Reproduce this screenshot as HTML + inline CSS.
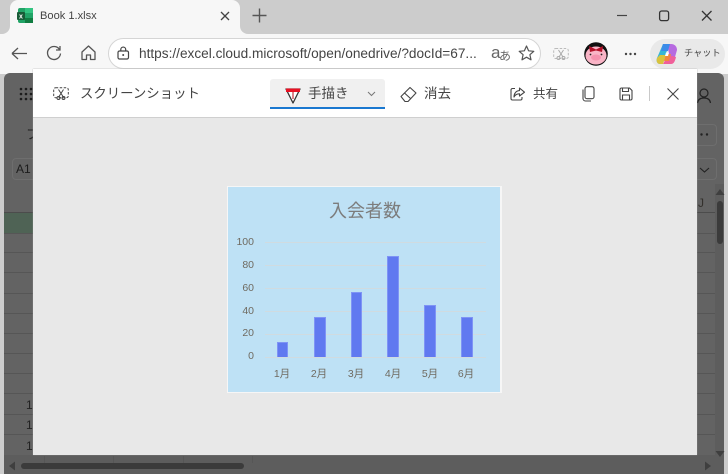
<!DOCTYPE html>
<html lang="ja"><head><meta charset="utf-8"><title>Book 1.xlsx</title>
<style>
html,body{margin:0;padding:0}
body{width:728px;height:474px;overflow:hidden;position:relative;background:#cccccc;font-family:"Liberation Sans","Noto Sans CJK JP",sans-serif;color:#333}
.a{position:absolute}
.t{position:absolute;white-space:nowrap;line-height:1}
svg{position:absolute;overflow:visible}
.b{position:absolute;background:#6079f0;border:1px solid #7f94f5;border-bottom:0;box-sizing:border-box}
.g{position:absolute;left:265px;width:221px;height:1px;background:#d0dbe0}
.yl{position:absolute;width:30px;left:224px;text-align:right;font-size:10.5px;line-height:12px;color:#6f6a60;white-space:nowrap}
.xl{position:absolute;width:30px;text-align:center;font-size:10.5px;line-height:12px;color:#6f6a60;white-space:nowrap}
.h{position:absolute;height:1px;background:#565656}
.v{position:absolute;width:1px;background:#565656}
</style></head><body>

<!-- tab strip -->
<div class="a" style="left:0;top:0;width:728px;height:34px;background:#cccccc"></div>
<div class="a" style="left:10px;top:0;width:230px;height:34px;background:#f7f7f7;border-radius:8px 8px 0 0"></div>
<div class="a" style="left:0;top:26px;width:10px;height:8px;background:#f7f7f7"></div>
<div class="a" style="left:0;top:0;width:10px;height:34px;background:#cccccc;border-radius:0 0 8px 0"></div>
<div class="a" style="left:240px;top:26px;width:10px;height:8px;background:#f7f7f7"></div>
<div class="a" style="left:240px;top:0;width:10px;height:34px;background:#cccccc;border-radius:0 0 0 8px"></div>

<svg style="left:17px;top:8px" width="16" height="16" viewBox="0 0 16 16">
<rect x="1" y="0" width="15" height="15" rx="2" fill="#21a366"/>
<rect x="8" y="0" width="8" height="5" fill="#33c481"/>
<rect x="8" y="10" width="8" height="5" fill="#107c41"/>
<rect x="0" y="4" width="8" height="8" rx="1" fill="#185c37"/>
<text x="2" y="10.5" font-size="7" font-weight="bold" fill="#fff" font-family="Liberation Sans">x</text>
</svg>
<div class="t" style="left:40px;top:11px;font-size:11.1px;color:#444">Book 1.xlsx</div>
<svg style="left:220px;top:11px" width="10" height="10" viewBox="0 0 10 10"><path d="M1 1L9 9M9 1L1 9" stroke="#444" stroke-width="1.3" fill="none"/></svg>
<svg style="left:252px;top:8px" width="15" height="15" viewBox="0 0 15 15"><path d="M7.5 0.5V14.5M0.5 7.5H14.5" stroke="#555" stroke-width="1.4" fill="none"/></svg>

<svg style="left:616px;top:10px" width="100" height="12" viewBox="0 0 100 12">
<path d="M1 5.5H11" stroke="#444" stroke-width="1.2" fill="none"/>
<rect x="43.6" y="1" width="9" height="9.6" rx="2" stroke="#333" stroke-width="1.3" fill="none"/>
<path d="M86 1L95.500 10.500M95.500 1L86 10.500" stroke="#333" stroke-width="1.3" fill="none"/>
</svg>

<!-- toolbar -->
<div class="a" style="left:0;top:34px;width:728px;height:40px;background:#f7f7f7"></div>
<svg style="left:11px;top:46px" width="17" height="15" viewBox="0 0 17 15"><path d="M1 7.500H16M1 7.500L7 2M1 7.500L7 13" stroke="#555" stroke-width="1.3" fill="none"/></svg>
<svg style="left:46px;top:45px" width="16" height="16" viewBox="0 0 16 16"><path d="M13.500 4.500A6.500 6.500 0 1 0 14.500 8.500M14 1V5H10" stroke="#555" stroke-width="1.3" fill="none"/></svg>
<svg style="left:81px;top:45px" width="15" height="16" viewBox="0 0 15 16"><path d="M1 7L7.500 1L14 7V14.500H9.500V10H5.500V14.500H1Z" stroke="#555" stroke-width="1.3" fill="none" stroke-linejoin="round"/></svg>
<div class="a" style="left:108px;top:38px;width:433px;height:31px;box-sizing:border-box;background:#fff;border:1px solid #d5d5d5;border-radius:16px"></div>
<svg style="left:117px;top:46px" width="13" height="14" viewBox="0 0 13 14"><rect x="1" y="5" width="10.500" height="8" rx="1.500" stroke="#444" stroke-width="1.200" fill="none"/><path d="M3.800 5V3.500A2.400 2.400 0 0 1 8.700 3.500V5" stroke="#444" stroke-width="1.200" fill="none"/><circle cx="6.200" cy="9" r="1" fill="#444"/></svg>
<div class="t" style="left:139px;top:47px;font-size:13.65px;color:#444">https://excel.cloud.microsoft/open/onedrive/?docId=67...</div>
<div class="t" style="left:491px;top:44px;font-size:17px;color:#666">a</div>
<div class="t" style="left:499px;top:50px;font-size:12px;color:#666">あ</div>
<svg style="left:518px;top:45px" width="17" height="16" viewBox="0 0 17 16"><path d="M8.500 1L10.600 5.800L15.800 6.300L11.900 9.700L13 14.800L8.500 12.200L4 14.800L5.100 9.700L1.200 6.300L6.400 5.800Z" stroke="#555" stroke-width="1.200" fill="none" stroke-linejoin="round"/></svg>
<svg style="left:553px;top:47px" width="16" height="14" viewBox="0 0 16 14"><rect x="0.700" y="1.500" width="14.600" height="10" rx="2" stroke="#bbb" stroke-width="1" stroke-dasharray="2.500 1.500" fill="none"/><path d="M5.500 3L10 10M10.500 3L6 10" stroke="#aaa" stroke-width="1" fill="none"/><circle cx="5.500" cy="11" r="1.500" stroke="#aaa" fill="none"/><circle cx="10.500" cy="11" r="1.500" stroke="#aaa" fill="none"/></svg>
<!-- avatar -->
<svg style="left:584px;top:42px" width="24" height="24" viewBox="0 0 24 24">
<circle cx="12" cy="12" r="11.800" fill="#111"/>
<ellipse cx="12" cy="13.500" rx="10.500" ry="9" fill="#f9b4c6"/>
<path d="M5 4L12 7.500L19 4L18 10L12 8.500L6 10Z" fill="#b3122a"/>
<ellipse cx="12" cy="15.500" rx="5" ry="3" fill="#f592ae"/>
<circle cx="6.500" cy="12.500" r="0.900" fill="#222"/><circle cx="17.500" cy="12.500" r="0.900" fill="#222"/>
</svg>
<svg style="left:624px;top:52px" width="13" height="4" viewBox="0 0 13 4"><circle cx="2" cy="2" r="1.200" fill="#444"/><circle cx="6.500" cy="2" r="1.200" fill="#444"/><circle cx="11" cy="2" r="1.200" fill="#444"/></svg>
<div class="a" style="left:650px;top:39px;width:75px;height:30px;border-radius:15px;background:#e9e9e9"></div>
<svg style="left:656px;top:43px" width="22" height="22" viewBox="0 0 22 22">
<path d="M7 1H13L9 14L6 21H4C1 21 0 18 1 15Z" fill="#37b6d6"/>
<path d="M1 15C0 18 1 21 4 21H7L10 12H4Z" fill="#d9c33d"/>
<path d="M12 1H15C19 1 21 4 21 7L19 14H13Z" fill="#b66ae0"/>
<path d="M7 1H14L12 8H5Z" fill="#3b8be8"/>
<path d="M7 21H15C18 21 19 18 20 14L12 12Z" fill="#f0609a"/>
<path d="M10 11H15L13 18H8Z" fill="#f3873f"/>
<path d="M10 9.500H13L12 13H9Z" fill="#fff"/>
</svg>
<div class="t" style="left:684px;top:49px;font-size:9.2px;color:#444">チャット</div>

<!-- dimmed app -->
<div class="a" style="left:4px;top:73px;width:720px;height:401px;background:#636363;border-radius:6px 6px 0 0"></div>
<svg style="left:19px;top:87px" width="15" height="15" viewBox="0 0 15 15" fill="#1c1c1c"><circle cx="2" cy="2" r="1.300"/><circle cx="7" cy="2" r="1.300"/><circle cx="12" cy="2" r="1.300"/><circle cx="2" cy="7" r="1.300"/><circle cx="7" cy="7" r="1.300"/><circle cx="12" cy="7" r="1.300"/><circle cx="2" cy="12" r="1.300"/><circle cx="7" cy="12" r="1.300"/><circle cx="12" cy="12" r="1.300"/></svg>
<svg style="left:697px;top:88px" width="14" height="16" viewBox="0 0 14 16"><circle cx="7" cy="5" r="4" stroke="#222" stroke-width="1.200" fill="none"/><path d="M0.500 15C1 11 4 10 7 10S13 11 13.500 15" stroke="#222" stroke-width="1.200" fill="none"/></svg>
<div class="t" style="left:26px;top:128px;font-size:13px;color:#222">フ</div>
<div class="a" style="left:12px;top:158px;width:40px;height:22px;box-sizing:border-box;border:1px solid #6e6e6e;border-radius:4px"></div>
<div class="t" style="left:16px;top:163px;font-size:12px;color:#1c1c1c">A1</div>
<div class="a" style="left:680px;top:124px;width:37px;height:22px;box-sizing:border-box;border:1px solid #6e6e6e;border-radius:4px"></div>
<svg style="left:700px;top:133px" width="10" height="3" viewBox="0 0 10 3" fill="#222"><circle cx="1.500" cy="1.500" r="1.200"/><circle cx="7" cy="1.500" r="1.200"/></svg>
<div class="a" style="left:680px;top:158px;width:37px;height:22px;box-sizing:border-box;border:1px solid #6e6e6e;border-radius:4px"></div>
<svg style="left:699px;top:167px" width="11" height="6" viewBox="0 0 11 6"><path d="M1 1L5.500 5L10 1" stroke="#222" stroke-width="1.100" fill="none"/></svg>

<!-- sheet -->
<div class="a" style="left:4px;top:213px;width:29px;height:20px;background:#4f6355"></div>
<div class="h" style="left:4px;top:212px;width:712px;background:#4c4c4c"></div>
<div class="h" style="left:4px;top:233px;width:712px"></div><div class="h" style="left:4px;top:252px;width:712px"></div>
<div class="h" style="left:4px;top:272px;width:712px"></div><div class="h" style="left:4px;top:293px;width:712px"></div>
<div class="h" style="left:4px;top:313px;width:712px"></div><div class="h" style="left:4px;top:333px;width:712px"></div>
<div class="h" style="left:4px;top:353px;width:712px"></div><div class="h" style="left:4px;top:373px;width:712px"></div>
<div class="h" style="left:4px;top:393px;width:712px"></div><div class="h" style="left:4px;top:414px;width:712px"></div>
<div class="h" style="left:4px;top:434px;width:712px"></div><div class="h" style="left:4px;top:455px;width:712px"></div>
<div class="t" style="left:26px;top:399px;font-size:12px;color:#222">1</div>
<div class="t" style="left:26px;top:419px;font-size:12px;color:#222">1</div>
<div class="t" style="left:26px;top:440px;font-size:12px;color:#222">1</div>
<div class="t" style="left:698px;top:197px;font-size:12px;color:#33302c">J</div>
<div class="a" style="left:715px;top:184px;width:9px;height:290px;background:#5d5d5d"></div>
<div class="a" style="left:717px;top:201px;width:6px;height:43px;border-radius:3px;background:#3b3b3b"></div>
<svg style="left:715px;top:188px" width="10" height="8" viewBox="0 0 10 8"><path d="M5 1L9.500 7H0.500Z" fill="#3f3f3f"/></svg>
<svg style="left:715px;top:450px" width="10" height="8" viewBox="0 0 10 8"><path d="M5 7L9.500 1H0.500Z" fill="#3f3f3f"/></svg>
<div class="a" style="left:4px;top:455px;width:711px;height:19px;background:#5d5d5d"></div>
<div class="v" style="left:44px;top:456px;height:7px"></div><div class="v" style="left:113px;top:456px;height:7px"></div>
<div class="v" style="left:183px;top:456px;height:7px"></div><div class="v" style="left:252px;top:456px;height:7px"></div>
<div class="a" style="left:21px;top:463px;width:223px;height:6px;border-radius:3px;background:#3b3b3b"></div>
<svg style="left:8px;top:461px" width="7" height="10" viewBox="0 0 7 10"><path d="M1 5L7 0.500V9.500Z" fill="#3f3f3f"/></svg>
<svg style="left:705px;top:461px" width="7" height="10" viewBox="0 0 7 10"><path d="M6 5L0 0.500V9.500Z" fill="#3f3f3f"/></svg>

<!-- dialog -->
<div class="a" style="left:33px;top:69px;width:664px;height:386px;background:#e8e8e8;box-shadow:0 0 1px #999"></div>
<div class="a" style="left:33px;top:69px;width:664px;height:48px;background:#fff;border-bottom:1px solid #cfcfcf"></div>
<svg style="left:53px;top:87px" width="16" height="14" viewBox="0 0 16 14"><rect x="0.700" y="0.700" width="14.600" height="10" rx="2" stroke="#444" stroke-width="1" stroke-dasharray="2.500 1.500" fill="none"/><path d="M5.500 2.500L10 9.500M10.500 2.500L6 9.500" stroke="#444" stroke-width="1" fill="none"/><circle cx="5.500" cy="11" r="1.500" stroke="#444" fill="none"/><circle cx="10.500" cy="11" r="1.500" stroke="#444" fill="none"/></svg>
<div class="t" style="left:80px;top:87px;font-size:13.400px;color:#444">スクリーンショット</div>

<div class="a" style="left:270px;top:79px;width:115px;height:30px;background:#f0f0f0;border-radius:3px 3px 0 0"></div>
<div class="a" style="left:270px;top:107px;width:115px;height:2px;background:#1a78d0"></div>
<svg style="left:285px;top:88px" width="16" height="16" viewBox="0 0 16 16"><path d="M1 1H15L8 15Z" fill="#fff" stroke="#333" stroke-width="1.300" stroke-linejoin="round"/><rect x="1" y="0.500" width="14" height="3.500" fill="#e81123"/><path d="M8 4V11" stroke="#c4303c" stroke-width="1.200"/></svg>
<div class="t" style="left:308px;top:87px;font-size:13.500px;color:#444">手描き</div>
<svg style="left:367px;top:91px" width="9" height="6" viewBox="0 0 9 6"><path d="M1 1L4.500 4.500L8 1" stroke="#777" stroke-width="1" fill="none"/></svg>
<svg style="left:400px;top:86px" width="17" height="17" viewBox="0 0 17 17"><path d="M1 10.500L10 1.500L16 7L8 15.500H5Z" stroke="#444" stroke-width="1.100" fill="none" stroke-linejoin="round"/><path d="M4.500 7L10.500 12.500" stroke="#444" stroke-width="1.100"/></svg>
<div class="t" style="left:424px;top:87px;font-size:13.500px;color:#444">消去</div>
<svg style="left:510px;top:87px" width="15" height="14" viewBox="0 0 15 14"><path d="M5 1.500H2.500A1.500 1.500 0 0 0 1 3V11.500A1.500 1.500 0 0 0 2.500 13H10.500A1.500 1.500 0 0 0 12 11.500V10" stroke="#444" stroke-width="1.100" fill="none"/><path d="M9.500 1L14.500 5.200L9.500 9V6.800C6.500 6.800 5 8 4 10C4 6.500 6 3.800 9.500 3.600Z" stroke="#444" stroke-width="1.100" fill="none" stroke-linejoin="round"/></svg>
<div class="t" style="left:533px;top:88px;font-size:12.500px;color:#444">共有</div>
<svg style="left:582px;top:86px" width="13" height="16" viewBox="0 0 13 16"><rect x="3" y="0.700" width="9" height="12" rx="2" stroke="#444" stroke-width="1.100" fill="none"/><path d="M1 3.500V12.500A2.500 2.500 0 0 0 3.500 15H9" stroke="#444" stroke-width="1.100" fill="none"/></svg>
<svg style="left:619px;top:87px" width="14" height="14" viewBox="0 0 14 14"><path d="M1 2.500A1.500 1.500 0 0 1 2.500 1H10.500L13 3.500V11.500A1.500 1.500 0 0 1 11.500 13H2.500A1.500 1.500 0 0 1 1 11.500Z" stroke="#444" stroke-width="1.100" fill="none"/><path d="M3.500 1V4.500H9.500V1M3.500 13V8H10.500V13" stroke="#444" stroke-width="1.100" fill="none"/></svg>
<div class="a" style="left:649px;top:86px;width:1px;height:15px;background:#c9c9c9"></div>
<svg style="left:667px;top:88px" width="12" height="12" viewBox="0 0 12 12"><path d="M0.500 0.500L11.500 11.500M11.500 0.500L0.500 11.500" stroke="#444" stroke-width="1.100" fill="none"/></svg>

<!-- chart -->
<div class="a" style="left:227px;top:186px;width:275px;height:207px;background:#f6f6f6"></div>
<div class="a" style="left:228px;top:187px;width:272px;height:205px;background:#bee1f5"></div>
<div class="t" style="left:329px;top:202px;font-size:18px;color:#7c7c7c">入会者数</div>
<div class="g" style="top:242px"></div><div class="g" style="top:265px"></div><div class="g" style="top:288px"></div>
<div class="g" style="top:311px"></div><div class="g" style="top:334px"></div><div class="g" style="top:357px"></div>
<div class="yl" style="top:236px">100</div><div class="yl" style="top:259px">80</div><div class="yl" style="top:282px">60</div>
<div class="yl" style="top:305px">40</div><div class="yl" style="top:327px">20</div><div class="yl" style="top:350px">0</div>
<div class="b" style="left:277px;top:342px;width:11px;height:15px"></div>
<div class="b" style="left:314px;top:317px;width:12px;height:40px"></div>
<div class="b" style="left:351px;top:292px;width:11px;height:65px"></div>
<div class="b" style="left:387px;top:256px;width:12px;height:101px"></div>
<div class="b" style="left:424px;top:305px;width:12px;height:52px"></div>
<div class="b" style="left:461px;top:317px;width:12px;height:40px"></div>
<div class="xl" style="left:267px;top:368px">1月</div><div class="xl" style="left:304px;top:368px">2月</div>
<div class="xl" style="left:341px;top:368px">3月</div><div class="xl" style="left:378px;top:368px">4月</div>
<div class="xl" style="left:415px;top:368px">5月</div><div class="xl" style="left:451px;top:368px">6月</div>
</body></html>
